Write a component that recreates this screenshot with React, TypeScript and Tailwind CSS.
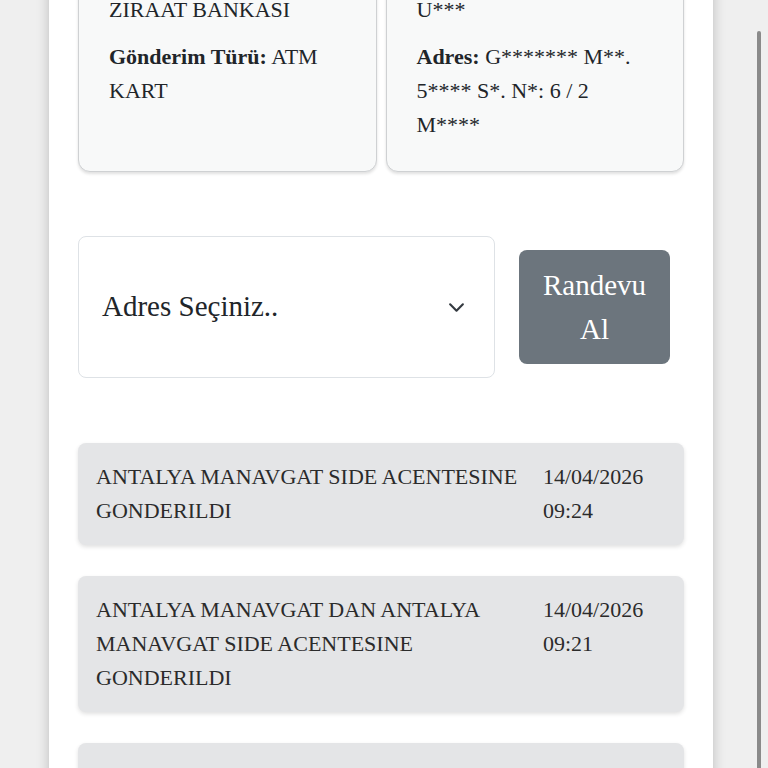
import React from 'react';

const serif = { fontFamily: '"Liberation Serif", "Times New Roman", serif' };

interface Movement {
  text: string;
  date: string;
  time: string;
}

const movements: Movement[] = [
  { text: 'ANTALYA MANAVGAT SIDE ACENTESINE GONDERILDI', date: '14/04/2026', time: '09:24' },
  { text: 'ANTALYA MANAVGAT DAN ANTALYA MANAVGAT SIDE ACENTESINE GONDERILDI', date: '14/04/2026', time: '09:21' },
  { text: 'ANTALYA MANAVGAT TRANSFER MERKEZINE ULASTI', date: '14/04/2026', time: '08:02' },
];

function InfoCard({ children }: { children: React.ReactNode }) {
  return (
    <div className="rounded-b-xl border border-[#cfd1d3] bg-[#f8f9f9] px-[30px] pt-[32px] pb-[29px] shadow-[0_2px_3px_rgba(0,0,0,0.12)]">
      {children}
    </div>
  );
}

export default function App() {
  return (
    <div style={serif} className="relative h-[768px] w-[768px] overflow-hidden bg-[#efefef] text-[#212529]">
      {/* white page column */}
      <div className="ml-[49px] -mt-[40px] w-[664px] bg-white px-[29px] pb-10 shadow-[0_0_12px_rgba(0,0,0,0.22)]">
        {/* top info cards */}
        <div className="grid grid-cols-2 gap-[9px] text-[22px] leading-[34px]">
          <InfoCard>
            <p>ZIRAAT BANKASI</p>
            <p className="mt-[13px]">
              <span className="font-bold">Gönderim Türü:</span> ATM KART
            </p>
          </InfoCard>
          <InfoCard>
            <p>U***</p>
            <p className="mt-[13px]">
              <span className="font-bold">Adres:</span> G******* M**. 5**** S*. N*: 6 / 2 M****
            </p>
          </InfoCard>
        </div>

        {/* address select + button */}
        <div className="mt-[64px] flex items-center">
          <div className="flex h-[142px] w-[417px] items-center justify-between rounded-lg border border-[#dee2e6] bg-white pl-[23px] pr-[29px]">
            <span className="text-[29px]">Adres Seçiniz..</span>
            <svg width="17" height="17" viewBox="0 0 16 16" fill="none">
              <path d="m2 5 6 6 6-6" stroke="#343a40" strokeWidth="2" strokeLinecap="round" strokeLinejoin="round" />
            </svg>
          </div>
          <button className="ml-[24px] w-[151px] rounded-lg bg-[#6c757d] py-[13px] text-center text-[29px] leading-[44px] text-white">
            Randevu
            <br />
            Al
          </button>
        </div>

        {/* movement list */}
        <div className="mt-[65px] flex flex-col gap-[31px]">
          {movements.map((m, i) => (
            <div
              key={i}
              className="flex gap-[9px] rounded-lg bg-[#e4e5e7] px-[18px] py-[17px] text-[22px] leading-[34px] text-[#2b2b2b] shadow-[0_2px_4px_rgba(0,0,0,0.12)]"
            >
              <div className="flex-1">{m.text}</div>
              <div className="w-[123px]">
                {m.date}
                <br />
                {m.time}
              </div>
            </div>
          ))}
        </div>
      </div>

      {/* overlay scrollbar */}
      <div className="absolute top-[31px] right-[7px] h-[760px] w-[4px] rounded-t-full bg-[#8a8a8a]" />
    </div>
  );
}
